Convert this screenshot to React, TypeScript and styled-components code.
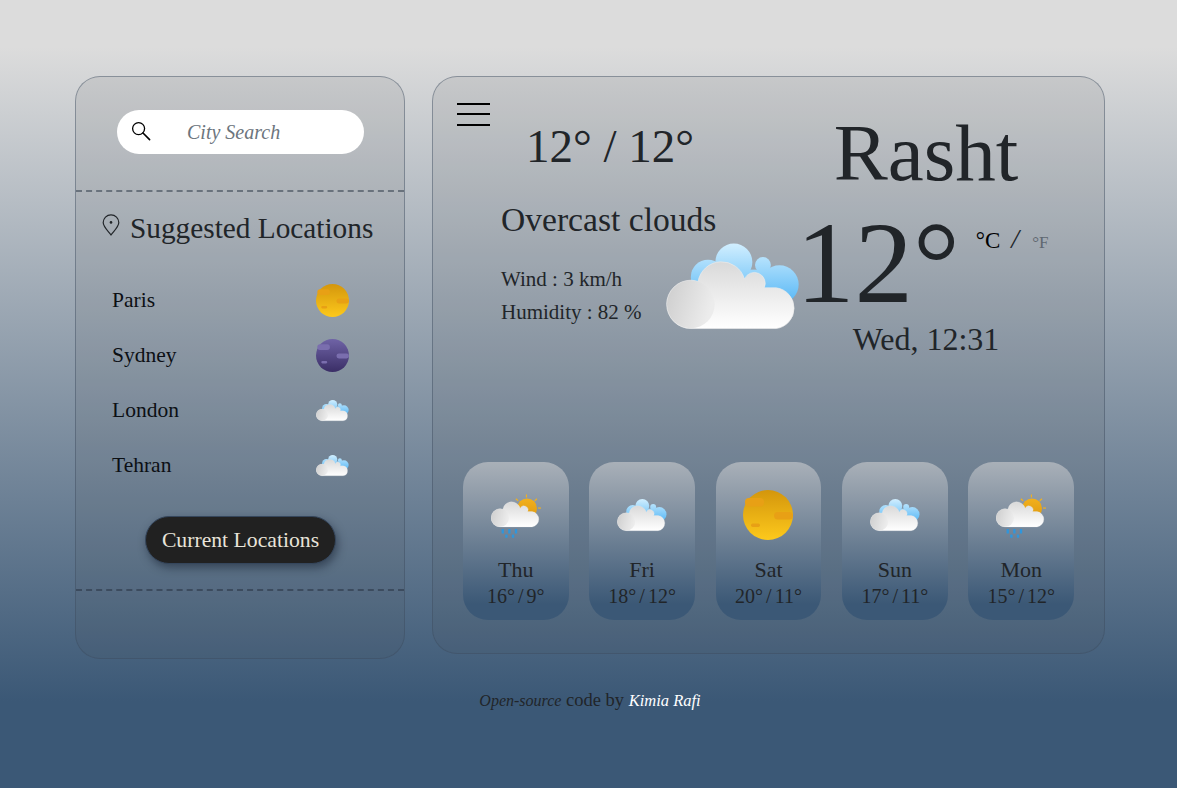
import React, { useId } from 'react';
import styled, { createGlobalStyle } from 'styled-components';

const serif = '"Liberation Serif", "DejaVu Serif", serif';

const suggested = [
  { city: 'Paris', icon: 'sun' },
  { city: 'Sydney', icon: 'moon' },
  { city: 'London', icon: 'cloud' },
  { city: 'Tehran', icon: 'cloud' },
];

const forecast = [
  { day: 'Thu', temp: '16° / 9°', icon: 'rain' },
  { day: 'Fri', temp: '18° / 12°', icon: 'cloud' },
  { day: 'Sat', temp: '20° / 11°', icon: 'sun' },
  { day: 'Sun', temp: '17° / 11°', icon: 'cloud' },
  { day: 'Mon', temp: '15° / 12°', icon: 'rain' },
];

export default function App() {
  return (
    <>
      <GlobalStyle />
      <Page>
        <Panels>
          <SidePanel>
            <SearchArea>
              <SearchBox>
                <SearchIcon />
                <SearchText>City Search</SearchText>
              </SearchBox>
            </SearchArea>
            <SuggestedArea>
              <SuggestedTitle>
                <PinIcon />
                <span>Suggested Locations</span>
              </SuggestedTitle>
              <CityList>
                {suggested.map(item => (
                  <CityRow key={item.city}>
                    <CityName>{item.city}</CityName>
                    <CityIcon>
                      {item.icon === 'sun' && <DiscIcon kind="sun" />}
                      {item.icon === 'moon' && <DiscIcon kind="moon" />}
                      {item.icon === 'cloud' && <CloudIcon />}
                    </CityIcon>
                  </CityRow>
                ))}
              </CityList>
              <CurrentButton>Current Locations</CurrentButton>
            </SuggestedArea>
          </SidePanel>

          <MainPanel>
            <Today>
              <TodayLeft>
                <TopLine>
                  <MenuButton>
                    <i />
                    <i />
                    <i />
                  </MenuButton>
                  <Range>12° / 12°</Range>
                </TopLine>
                <Conditions>
                  <ConditionText>
                    <Summary>Overcast clouds</Summary>
                    <Stat>Wind : 3 km/h</Stat>
                    <Stat>Humidity : 82 %</Stat>
                  </ConditionText>
                  <BigCloud>
                    <CloudIcon />
                  </BigCloud>
                </Conditions>
              </TodayLeft>
              <TodayRight>
                <City>Rasht</City>
                <TempRow>
                  <Temp>12°</Temp>
                  <Units>
                    <Unit $active>°C</Unit>
                    <UnitSlash>/</UnitSlash>
                    <Unit>°F</Unit>
                  </Units>
                </TempRow>
                <DateLine>Wed, 12:31</DateLine>
              </TodayRight>
            </Today>
            <Cards>
              {forecast.map(item => (
                <Card key={item.day}>
                  <CardIcon>
                    {item.icon === 'rain' && <RainIcon />}
                    {item.icon === 'cloud' && <CloudIcon />}
                    {item.icon === 'sun' && <DiscIcon kind="sun" />}
                  </CardIcon>
                  <CardDay>{item.day}</CardDay>
                  <CardTemp>{item.temp}</CardTemp>
                </Card>
              ))}
            </Cards>
          </MainPanel>
        </Panels>
        <Footer>
          <Script>Open-source</Script> code by <Author>Kimia Rafi</Author>
        </Footer>
      </Page>
    </>
  );
}

function SearchIcon() {
  return (
    <svg width="20" height="20" viewBox="0 0 20 20" fill="none" stroke="#000" strokeWidth="1.3">
      <circle cx="7.6" cy="7.6" r="6" />
      <path d="M12 12 L18.6 18.6" strokeLinecap="round" strokeWidth="1.6" />
    </svg>
  );
}

function PinIcon() {
  return (
    <svg width="18" height="22" viewBox="0 0 18 22" fill="none" stroke="#212529" strokeWidth="1.2">
      <path d="M9 21 C6 17 1.2 12.8 1.2 8.6 A7.8 7.8 0 0 1 16.8 8.6 C16.8 12.8 12 17 9 21 Z" />
      <circle cx="9" cy="8.4" r="1.3" fill="#212529" stroke="none" />
    </svg>
  );
}

function CloudShapes({ id }: { id: string }) {
  return (
    <g>
      <defs>
        <linearGradient id={`${id}-front`} x1="0" y1="0" x2="0" y2="1">
          <stop offset="0" stopColor="#d9d9d9" />
          <stop offset="1" stopColor="#ffffff" />
        </linearGradient>
        <linearGradient id={`${id}-left`} x1="0" y1="0" x2="1" y2="0.3">
          <stop offset="0" stopColor="#cdcdcd" />
          <stop offset="1" stopColor="#ececec" />
        </linearGradient>
      </defs>
      <path
        fill={`url(#${id}-front)`}
        stroke="#ececec"
        strokeWidth="2"
        d="M120 328 A73 73 0 0 1 120 182 Q130 182 142 186 A72 72 0 0 1 282 178 A32 32 0 0 1 342 205 L378 205 A62 62 0 0 1 378 328 Z"
      />
      <circle cx="120" cy="255" r="72" fill={`url(#${id}-left)`} />
    </g>
  );
}

function CloudIcon() {
  const id = useId();
  return (
    <svg viewBox="45 70 405 262" width="100%" height="100%">
      <defs>
        <linearGradient id={`${id}-back`} gradientUnits="userSpaceOnUse" x1="0" y1="70" x2="0" y2="240">
          <stop offset="0" stopColor="#d2efff" />
          <stop offset="1" stopColor="#5fbbf6" />
        </linearGradient>
      </defs>
      <g fill={`url(#${id}-back)`}>
        <circle cx="250" cy="127" r="56" />
        <circle cx="338" cy="136" r="24" />
        <circle cx="388" cy="195" r="58" />
        <circle cx="172" cy="172" r="52" />
        <rect x="170" y="150" width="220" height="85" />
      </g>
      <CloudShapes id={id} />
    </svg>
  );
}

function RainIcon() {
  const id = useId();
  const rays = [
    [212, 125, 212, 116],
    [237, 135, 244, 129],
    [247, 157, 256, 157],
    [187, 135, 180, 129],
  ];
  return (
    <svg viewBox="105 103 151 150" width="50" height="50">
      <defs>
        <linearGradient id={`${id}-sun`} x1="0" y1="0" x2="0" y2="1">
          <stop offset="0" stopColor="#f2b01c" />
          <stop offset="1" stopColor="#dd9a12" />
        </linearGradient>
      </defs>
      {rays.map(([x1, y1, x2, y2]) => (
        <line key={`${x1}-${y1}`} x1={x1} y1={y1} x2={x2} y2={y2} stroke="#f0b020" strokeWidth="3.5" />
      ))}
      <circle cx="214" cy="158" r="30" fill={`url(#${id}-sun)`} />
      <g transform="translate(105 137) scale(0.375) translate(-47 -123)">
        <CloudShapes id={id} />
      </g>
      <g fill="#2f96dc">
        <rect x="137" y="220" width="7" height="14" rx="2" />
        <rect x="157" y="220" width="7" height="14" rx="2" />
        <rect x="177" y="220" width="7" height="14" rx="2" />
        <rect x="148" y="237" width="7" height="10" rx="2" />
        <rect x="168" y="237" width="7" height="10" rx="2" />
      </g>
    </svg>
  );
}

function DiscIcon({ kind }: { kind: 'sun' | 'moon' }) {
  const id = useId();
  const colors =
    kind === 'sun'
      ? { top: '#d4960c', bottom: '#fdc91c', patch: '#e8a015' }
      : { top: '#6f63a6', bottom: '#3a2e66', patch: '#7a6eae' };
  return (
    <svg viewBox="0 0 50 50" width="100%" height="100%">
      <defs>
        <linearGradient id={id} x1="0" y1="0" x2="0" y2="1">
          <stop offset="0" stopColor={colors.top} />
          <stop offset="1" stopColor={colors.bottom} />
        </linearGradient>
      </defs>
      <circle cx="25" cy="25" r="25" fill={`url(#${id})`} />
      <rect x="2" y="8" width="19" height="8.5" rx="4" fill={colors.patch} />
      <rect x="31" y="22" width="19" height="7.5" rx="3.7" fill={colors.patch} />
      <rect x="8" y="33.5" width="9" height="3.5" rx="1.7" fill={colors.patch} />
    </svg>
  );
}

const GlobalStyle = createGlobalStyle`
  html, body {
    margin: 0;
    padding: 0;
  }
  body {
    font-family: ${serif};
    color: #212529;
  }
`;

const Page = styled.div`
  box-sizing: border-box;
  height: 788px;
  overflow: hidden;
  padding: 76px 72px 0 75px;
  background: linear-gradient(#dcdcdc 6%, #3b5876 89%);
`;

const Panels = styled.div`
  display: grid;
  grid-template-columns: 330px 673px;
  column-gap: 27px;
  align-items: start;
`;

const SidePanel = styled.section`
  box-sizing: border-box;
  height: 583px;
  border: 1px solid rgba(60, 75, 95, 0.45);
  border-radius: 25px;
  background: rgba(80, 80, 80, 0.1);
`;

const SearchArea = styled.div`
  box-sizing: border-box;
  height: 115px;
  padding: 33px 0 0 41px;
  border-bottom: 2px dashed rgba(50, 60, 75, 0.55);
`;

const SearchBox = styled.div`
  display: flex;
  align-items: center;
  width: 247px;
  height: 44px;
  padding-left: 14px;
  box-sizing: border-box;
  border-radius: 22px;
  background: #fff;

  svg {
    flex: none;
    margin-top: -2px;
  }
`;

const SearchText = styled.span`
  margin-left: 36px;
  font-size: 20px;
  font-style: italic;
  color: #6c757d;
`;

const SuggestedArea = styled.div`
  box-sizing: border-box;
  height: 399px;
  padding: 20px 0 0;
  border-bottom: 2px dashed rgba(40, 50, 65, 0.55);
`;

const SuggestedTitle = styled.h2`
  display: flex;
  align-items: flex-start;
  gap: 10px;
  margin: 0 0 0 26px;
  font-size: 29.3px;
  font-weight: 400;
  line-height: 32px;
  color: #212529;

  svg {
    flex: none;
    margin-top: 2px;
  }
`;

const CityList = styled.ul`
  list-style: none;
  margin: 29px 0 0;
  padding: 0 55px 0 36px;
`;

const CityRow = styled.li`
  display: flex;
  align-items: center;
  justify-content: space-between;
  height: 55px;
`;

const CityName = styled.span`
  font-size: 21.5px;
  color: #0c0f14;
`;

const CityIcon = styled.span`
  display: block;
  width: 33px;
  height: 33px;
`;

const CurrentButton = styled.button`
  display: block;
  width: 191px;
  height: 48px;
  margin: 23px 0 0 69px;
  padding: 0;
  border: 1px solid #35465c;
  border-radius: 24px;
  background: #212121;
  color: #e8e4da;
  font-family: ${serif};
  font-size: 21.7px;
  box-shadow: 2px 4px 8px rgba(20, 30, 45, 0.5);
`;

const MainPanel = styled.section`
  box-sizing: border-box;
  height: 578px;
  padding: 26px 30px 0 24px;
  border: 1px solid rgba(60, 75, 95, 0.45);
  border-radius: 25px;
  background: rgba(80, 80, 80, 0.1);
`;

const Today = styled.div`
  display: flex;
  height: 359px;
`;

const TodayLeft = styled.div`
  width: 343px;
  flex: none;
`;

const TopLine = styled.div`
  display: flex;
  align-items: flex-start;
`;

const MenuButton = styled.div`
  display: flex;
  flex-direction: column;
  gap: 8.4px;
  width: 33px;
  flex: none;

  i {
    display: block;
    height: 2px;
    background: #000;
  }
`;

const Range = styled.div`
  margin: 13px 0 0 36px;
  font-size: 47px;
  line-height: 60px;
  white-space: nowrap;
`;

const Conditions = styled.div`
  display: flex;
  margin: 1px 0 0 44px;
`;

const ConditionText = styled.div`
  width: 165px;
  flex: none;
  padding-top: 24px;
`;

const Summary = styled.div`
  width: 230px;
  margin-bottom: 24px;
  font-size: 33.6px;
  line-height: 38px;
  white-space: nowrap;
`;

const Stat = styled.div`
  font-size: 21px;
  line-height: 33px;
  white-space: nowrap;
`;

const BigCloud = styled.div`
  width: 134px;
  height: 87px;
  flex: none;
  margin-top: 66px;
`;

const TodayRight = styled.div`
  width: 252px;
  flex: none;
  text-align: center;
`;

const City = styled.div`
  margin-top: 3px;
  font-size: 81px;
  line-height: 94px;
`;

const TempRow = styled.div`
  display: flex;
  align-items: flex-start;
  margin-top: 6px;
`;

const Temp = styled.div`
  margin-left: -4px;
  font-size: 117px;
  line-height: 114px;
`;

const Units = styled.div`
  display: flex;
  align-items: baseline;
  margin: 17px 0 0 16px;
`;

const Unit = styled.span<{ $active?: boolean }>`
  font-size: ${props => (props.$active ? '23px' : '17px')};
  color: ${props => (props.$active ? '#000' : '#5f6770')};
`;

const UnitSlash = styled.span`
  margin: 0 13px 0 11px;
  font-size: 28px;
  font-style: italic;
`;

const DateLine = styled.div`
  font-size: 32px;
  line-height: 38px;
`;

const Cards = styled.div`
  display: flex;
  justify-content: space-between;
  padding-left: 6px;
`;

const Card = styled.article`
  width: 105.6px;
  height: 158px;
  padding-top: 28px;
  box-sizing: border-box;
  border-radius: 25px;
  background: linear-gradient(#a9b0b8, #3b5876 90%);
  text-align: center;
`;

const CardIcon = styled.div`
  display: flex;
  justify-content: center;
  height: 50px;
  margin: 0 auto;
  width: 50px;
`;

const CardDay = styled.div`
  margin-top: 17px;
  font-size: 22px;
  line-height: 26px;
`;

const CardTemp = styled.div`
  font-size: 20px;
  line-height: 27px;
  word-spacing: -2px;
  white-space: nowrap;
`;

const Footer = styled.footer`
  margin-top: 29px;
  text-align: center;
  font-size: 18.5px;
  line-height: 24px;
`;

const Script = styled.span`
  font-size: 16px;
  font-style: italic;
`;

const Author = styled.span`
  font-size: 16.5px;
  font-style: italic;
  color: #fff;
`;
